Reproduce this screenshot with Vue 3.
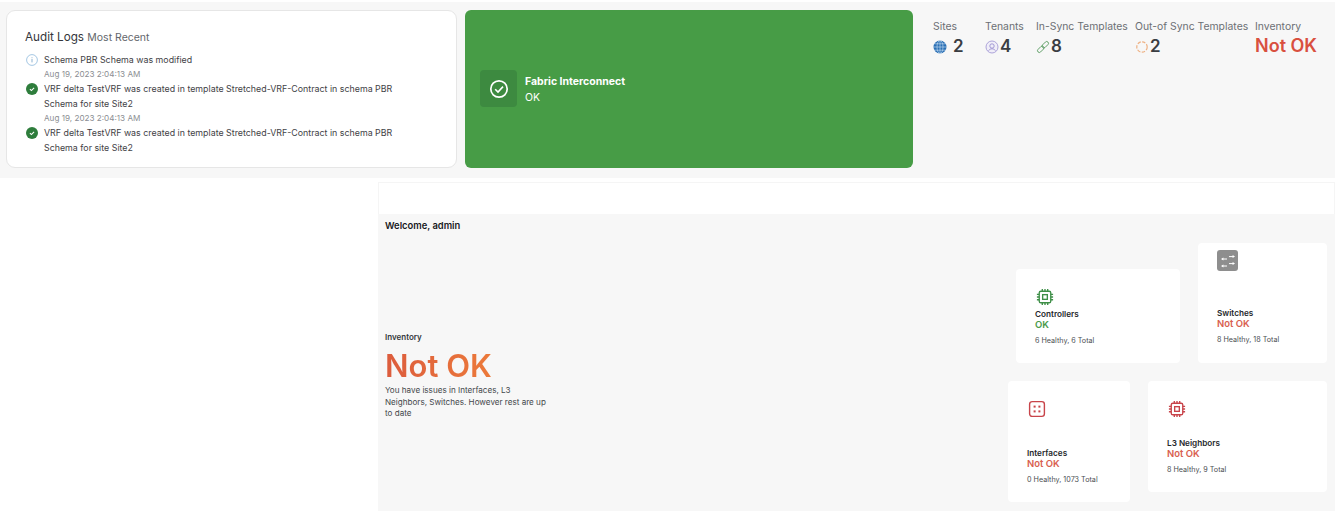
<script setup>
const logs = [
  { id: 1, kind: 'info', text: 'Schema PBR Schema was modified', time: 'Aug 19, 2023 2:04:13 AM' },
  { id: 2, kind: 'ok', text: 'VRF delta TestVRF was created in template Stretched-VRF-Contract in schema PBR Schema for site Site2', time: 'Aug 19, 2023 2:04:13 AM' },
  { id: 3, kind: 'ok', text: 'VRF delta TestVRF was created in template Stretched-VRF-Contract in schema PBR Schema for site Site2' },
]
</script>

<template>
  <div class="page">
    <section class="top">
      <div class="audit">
        <h2 class="audit-title">Audit Logs <span>Most Recent</span></h2>
        <div v-for="log in logs" :key="log.id" class="log">
          <div class="log-row">
            <svg v-if="log.kind === 'info'" class="log-icon" viewBox="0 0 12 12">
              <circle cx="6" cy="6" r="5.4" fill="none" stroke="#8db9dc" stroke-width="0.8" />
              <rect x="5.6" y="5" width="0.8" height="3.4" fill="#6f9fc6" />
              <rect x="5.6" y="3.3" width="0.8" height="0.9" fill="#6f9fc6" />
            </svg>
            <svg v-else class="log-icon" viewBox="0 0 12 12">
              <circle cx="6" cy="6" r="6" fill="#2e7d3c" />
              <path d="M3.9 6.2 5.4 7.6 8.1 4.9" fill="none" stroke="#fff" stroke-width="1.1" />
            </svg>
            <p class="log-text">{{ log.text }}</p>
          </div>
          <div v-if="log.time" class="log-time">{{ log.time }}</div>
        </div>
      </div>

      <div class="fabric">
        <div class="fabric-icon">
          <svg width="20" height="20" viewBox="0 0 20 20">
            <circle cx="10" cy="10" r="8.2" fill="none" stroke="#fff" stroke-width="1.7" />
            <path d="M6.2 10.2 9 13 14 7.6" fill="none" stroke="#fff" stroke-width="1.6" />
          </svg>
        </div>
        <div class="fabric-copy">
          <div class="fabric-name">Fabric Interconnect</div>
          <div class="fabric-state">OK</div>
        </div>
      </div>

      <div class="stats">
        <div class="stat stat-sites">
          <div class="stat-label">Sites</div>
          <div class="stat-value">
            <svg class="stat-icon" viewBox="0 0 14 14">
              <circle cx="7" cy="7" r="6.5" fill="#2a6fb5" />
              <g fill="none" stroke="#cfe2f3" stroke-width="0.6">
                <ellipse cx="7" cy="7" rx="3" ry="6.5" />
                <path d="M7 .5v13M.5 7h13M1.5 3.8h11M1.5 10.2h11" />
              </g>
            </svg>
            <span class="num-sites">2</span>
          </div>
        </div>
        <div class="stat stat-tenants">
          <div class="stat-label">Tenants</div>
          <div class="stat-value">
            <svg class="stat-icon" viewBox="0 0 14 14">
              <circle cx="7" cy="7" r="6" fill="#f0eef8" stroke="#a59bd6" stroke-width="0.9" />
              <circle cx="7" cy="6" r="2.2" fill="none" stroke="#9a90d0" stroke-width="0.9" />
              <path d="M3.6 10.6c.8-1.2 2-1.8 3.4-1.8s2.6.6 3.4 1.8" fill="none" stroke="#9a90d0" stroke-width="0.9" />
            </svg>
            <span>4</span>
          </div>
        </div>
        <div class="stat stat-insync">
          <div class="stat-label">In-Sync Templates</div>
          <div class="stat-value">
            <svg class="stat-icon" viewBox="0 0 14 14">
              <g fill="none" stroke="#5a9c62" stroke-width="0.9" transform="rotate(-45 7 7)">
                <rect x="0" y="5.2" width="7.6" height="3.6" rx="1.8" />
                <rect x="6.4" y="5.2" width="7.6" height="3.6" rx="1.8" />
              </g>
            </svg>
            <span>8</span>
          </div>
        </div>
        <div class="stat stat-outsync">
          <div class="stat-label">Out-of Sync Templates</div>
          <div class="stat-value">
            <svg class="stat-icon" viewBox="0 0 14 14">
              <circle cx="7" cy="7" r="5.2" fill="none" stroke="#eeb183" stroke-width="1.2" stroke-dasharray="3.4 1.4" />
            </svg>
            <span>2</span>
          </div>
        </div>
        <div class="stat stat-inventory">
          <div class="stat-label">Inventory</div>
          <div class="stat-value bad-big">Not OK</div>
        </div>
      </div>
    </section>

    <section class="panel">
      <div class="panel-head"></div>
      <div class="panel-body">
        <div class="welcome">Welcome, admin</div>
        <div class="panel-main">
          <div class="summary">
            <div class="summary-label">Inventory</div>
            <div class="summary-state">Not OK</div>
            <p class="summary-text">You have issues in Interfaces, L3 Neighbors, Switches. However rest are up to date</p>
          </div>

          <div class="cards">
            <div class="card-row card-row-top">
              <div class="card card-controllers">
                <svg class="card-icon" viewBox="0 0 20 20">
                  <g fill="none" stroke="#3f8f48" stroke-width="1.5">
                    <rect x="3.6" y="3.6" width="12.8" height="12.8" rx="1.8" />
                    <rect x="7.4" y="7.4" width="5.2" height="5.2" />
                    <path d="M7 1v2.6M10 1v2.6M13 1v2.6M7 16.4V19M10 16.4V19M13 16.4V19M1 7h2.6M1 10h2.6M1 13h2.6M16.4 7H19M16.4 10H19M16.4 13H19" />
                  </g>
                </svg>
                <div class="card-name">Controllers</div>
                <div class="card-state good">OK</div>
                <div class="card-meta">6 Healthy, 6 Total</div>
              </div>
              <div class="card card-switches">
                <div class="switch-icon">
                  <svg width="20" height="20" viewBox="0 0 20 20">
                    <g fill="none" stroke="#fff" stroke-width="1">
                      <path d="M4.5 8H9M11 5.6h4.5M4.5 15H9M11 12.6h4.5" />
                    </g>
                    <g fill="#fff">
                      <path d="M3 8l2.4-1.5v3zM17 5.6l-2.4-1.5v3zM3 15l2.4-1.5v3zM17 12.6l-2.4-1.5v3z" />
                    </g>
                  </svg>
                </div>
                <div class="card-name">Switches</div>
                <div class="card-state bad">Not OK</div>
                <div class="card-meta">8 Healthy, 18 Total</div>
              </div>
            </div>

            <div class="card-row">
              <div class="card card-interfaces">
                <svg class="card-icon" viewBox="0 0 18 18">
                  <rect x="1.6" y="1.6" width="14.8" height="14.8" rx="2.6" fill="none" stroke="#c8444a" stroke-width="1.4" />
                  <g fill="#c8444a">
                    <rect x="5.6" y="5.6" width="2" height="2" />
                    <rect x="10.4" y="5.6" width="2" height="2" />
                    <rect x="5.6" y="10.4" width="2" height="2" />
                    <rect x="10.4" y="10.4" width="2" height="2" />
                  </g>
                </svg>
                <div class="card-name">Interfaces</div>
                <div class="card-state bad">Not OK</div>
                <div class="card-meta">0 Healthy, 1073 Total</div>
              </div>
              <div class="card card-neighbors">
                <svg class="card-icon" viewBox="0 0 20 20">
                  <g fill="none" stroke="#c8444a" stroke-width="1.5">
                    <rect x="3.6" y="3.6" width="12.8" height="12.8" rx="1.8" />
                    <rect x="7.4" y="7.4" width="5.2" height="5.2" />
                    <path d="M7 1v2.6M10 1v2.6M13 1v2.6M7 16.4V19M10 16.4V19M13 16.4V19M1 7h2.6M1 10h2.6M1 13h2.6M16.4 7H19M16.4 10H19M16.4 13H19" />
                  </g>
                </svg>
                <div class="card-name">L3 Neighbors</div>
                <div class="card-state bad">Not OK</div>
                <div class="card-meta">8 Healthy, 9 Total</div>
              </div>
            </div>
          </div>
        </div>
      </div>
    </section>
  </div>
</template>

<style>
html,
body {
  margin: 0;
  background: #fff;
}
</style>

<style scoped>
.page {
  width: 1335px;
  height: 511px;
  overflow: hidden;
  font-family: Inter, "Liberation Sans", sans-serif;
  color: #3a3d42;
  padding-top: 2px;
  box-sizing: border-box;
}

.top {
  display: flex;
  height: 176px;
  padding: 8px 0 10px 6px;
  box-sizing: border-box;
  background: #f7f7f7;
}

.audit {
  width: 451px;
  box-sizing: border-box;
  padding: 19px 18px 0 18px;
  background: #fff;
  border: 1px solid #e6e6e6;
  border-radius: 9px;
  font-size: 8.85px;
}

.audit-title {
  margin: 0 0 7px;
  font-size: 11.7px;
  font-weight: 400;
  line-height: 14px;
  color: #33363b;
}

.audit-title span {
  font-size: 10.5px;
  color: #63666b;
}

.log-row {
  display: flex;
  gap: 6px;
  margin-left: 1px;
}

.log-icon {
  flex: none;
  width: 12px;
  height: 12px;
  margin-top: 2px;
}

.log-text {
  margin: 0;
  width: 358px;
  line-height: 15px;
  color: #3f4246;
}

.log-time {
  margin: 1px 0 1px 19px;
  font-size: 8.15px;
  line-height: 12px;
  color: #8b8e92;
}

.fabric {
  width: 448px;
  margin-left: 8px;
  display: flex;
  align-items: center;
  gap: 8px;
  padding-left: 15px;
  padding-bottom: 1px;
  box-sizing: border-box;
  background: #479c46;
  border-radius: 6px;
  color: #fff;
}

.fabric-icon {
  width: 37px;
  height: 37px;
  display: flex;
  align-items: center;
  justify-content: center;
  background: #3d8a40;
  border-radius: 4px;
}

.fabric-copy {
  padding-top: 2px;
}

.fabric-name {
  font-size: 10.5px;
  font-weight: 700;
  line-height: 15px;
  margin-bottom: 1px;
}

.fabric-state {
  font-size: 10.5px;
  line-height: 16px;
}

.stats {
  display: flex;
  padding: 10px 0 0 20px;
  font-size: 10.4px;
  white-space: nowrap;
}

.stat-label {
  line-height: 13px;
  color: #6c6f74;
}

.stat-value {
  display: flex;
  align-items: center;
  margin-top: 3px;
  font-size: 17px;
  font-weight: 600;
  line-height: 20px;
  color: #3a3d42;
}

.stat-icon {
  width: 14px;
  height: 14px;
  margin-right: 1px;
  margin-top: 2px;
}

.num-sites {
  margin-left: 5px;
}

.stat-sites {
  width: 52px;
}

.stat-tenants {
  width: 51px;
}

.stat-insync {
  width: 99px;
}

.stat-outsync {
  width: 120px;
}

.stat-value.bad-big {
  font-size: 18px;
  color: #d9503f;
}

.panel {
  margin: 4px 0 0 378px;
  height: 329px;
}

.panel-head {
  height: 32px;
  background: #fff;
  border: 1px solid #f5f5f5;
  border-bottom: 0;
  box-sizing: border-box;
}

.panel-body {
  height: 297px;
  background: #f7f7f7;
  box-sizing: border-box;
  padding: 6px 8px 0 7px;
}

.welcome {
  font-size: 9.4px;
  font-weight: 600;
  line-height: 12px;
  color: #17191c;
}

.panel-main {
  display: flex;
  justify-content: space-between;
  align-items: flex-start;
}

.summary {
  width: 165px;
  margin-top: 100px;
}

.summary-label {
  font-size: 8px;
  font-weight: 600;
  line-height: 11px;
  color: #34373b;
}

.summary-state {
  display: inline-block;
  margin-top: 5px;
  font-size: 31px;
  font-weight: 600;
  line-height: 36px;
  background: linear-gradient(90deg, #dc5c3d, #ec7a3a);
  -webkit-background-clip: text;
  background-clip: text;
  color: transparent;
}

.summary-text {
  margin: 1px 0 0;
  font-size: 8.1px;
  line-height: 11.6px;
  color: #44474b;
}

.cards {
  display: flex;
  flex-direction: column;
  gap: 18px;
  margin-top: 11px;
}

.card-row {
  display: flex;
  justify-content: flex-end;
  align-items: flex-start;
  gap: 18px;
}

.card-row-top {
  align-items: flex-end;
}

.card {
  box-sizing: border-box;
  background: #fff;
  border-radius: 4px;
  padding-left: 19px;
  font-size: 7.2px;
}

.card-icon {
  display: block;
  width: 18px;
  height: 18px;
  margin-left: 1px;
}

.card-controllers {
  width: 164px;
  height: 94px;
  padding-top: 19px;
}

.card-switches {
  width: 129px;
  height: 120px;
  padding-top: 7px;
}

.card-interfaces {
  width: 122px;
  height: 121px;
  padding-top: 19px;
}

.card-neighbors {
  width: 179px;
  height: 111px;
  padding: 19px 0 0 19px;
}

.switch-icon {
  width: 21px;
  height: 21px;
  display: flex;
  align-items: center;
  justify-content: center;
  background: #8e8e8e;
  border-radius: 3px;
}

.card-name {
  font-size: 8.2px;
  font-weight: 600;
  line-height: 10px;
  color: #25282c;
}

.card-controllers .card-name {
  margin-top: 3px;
}

.card-switches .card-name {
  margin-top: 37px;
}

.card-interfaces .card-name {
  margin-top: 30px;
}

.card-neighbors .card-name {
  margin-top: 20px;
}

.card-state {
  font-size: 9.5px;
  font-weight: 600;
  line-height: 12px;
}

.good {
  color: #4a9a49;
}

.bad {
  color: #d9604f;
}

.card-meta {
  margin-top: 4px;
  line-height: 11px;
  color: #4b4e52;
}
</style>
